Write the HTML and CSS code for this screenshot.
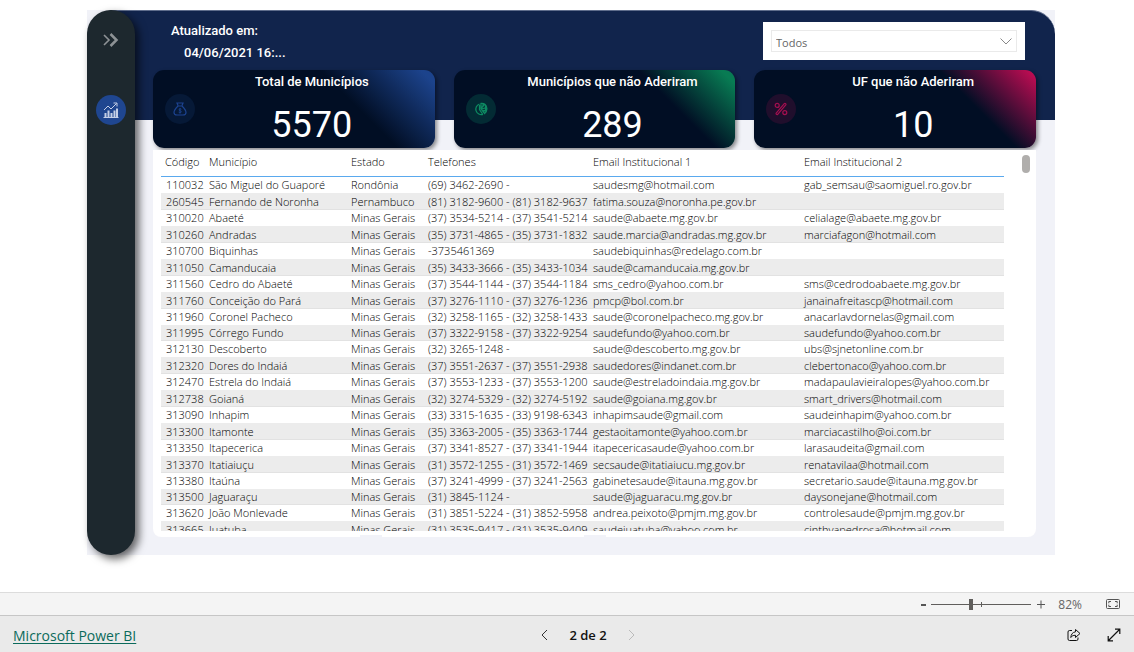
FILE: index.html
```html
<!DOCTYPE html>
<html lang="pt-BR">
<head>
<meta charset="utf-8">
<meta name="viewport" content="width=device-width, initial-scale=1">
<title>Microsoft Power BI</title>
<link rel="stylesheet" href="styles.css">
</head>
<body>
<main class="stage">
  <div class="report">
    <nav class="sidebar" aria-label="Menu">
      <button class="side-btn" type="button" aria-label="Expandir menu">
        <svg width="18" height="16" viewBox="0 0 18 16" fill="none" stroke="#8d9295"><path d="M2 3l5 5-5 5" stroke-width="1.6"/><path d="M8.500 2l6 6-6 6" stroke-width="2.500"/></svg>
      </button>
      <button class="side-btn side-btn-active" type="button" aria-label="Indicadores">
        <svg width="16" height="16" viewBox="0 0 16 16" fill="none" stroke="#c3cee6"><path d="M1 8l4-4 3 3 5.500-5.500M10.500 1H14v3.500"/><path d="M.5 15.500h15" /><path d="M2.500 15v-4M5.500 15V8.500M8.500 15v-4M11.500 15V8.500M14 15V6.500" stroke-width="2"/></svg>
      </button>
    </nav>
    <div class="content">
      <header class="report-head">
        <div class="updated">
          <p class="updated-label">Atualizado em:</p>
          <p class="updated-date">04/06/2021 16:...</p>
        </div>
        <div class="slicer">
          <select class="slicer-select" aria-label="Filtro"><option>Todos</option></select>
          <svg class="slicer-arrow" width="12" height="7" viewBox="0 0 12 7" fill="none" stroke="#888"><path d="M.5.5L6 6 11.500.5"/></svg>
        </div>
      </header>
      <section class="cards">
        <article class="card card-blue">
          <span class="card-icon"><svg width="14" height="14" viewBox="0 0 14 14" fill="none" stroke="#1c4390" stroke-width="1.200"><path d="M5 3.500L4 1h6L9 3.500M4.500 4h5M5 4C3 6 1 8 1 10.500 1 12.500 2 13 4 13h6c2 0 3-.5 3-2.500C13 8 11 6 9 4"/><path d="M8.300 7.300C7.500 6.500 5.800 6.800 6 8c.2 1 2.300.6 2.300 1.800 0 1-1.700 1.200-2.600.4M7 6v5.500" stroke-width=".9"/></svg></span>
          <h2 class="card-title">Total de Municípios</h2>
          <p class="card-value">5570</p>
        </article>
        <article class="card card-green">
          <span class="card-icon"><svg width="14" height="14" viewBox="0 0 14 14" fill="none" stroke="#0d8a62" stroke-width="1.300"><path d="M5.500 2A5.300 5.300 0 1 0 9 12.300"/><path d="M5.500 3v4.500L8.500 12M7 1.500v5.200l3.600 4.800c2-1.700 2.600-3.500 2.100-5.800C12.200 3 10 1.200 7 1.500zM7 6.500l3.500-4M7.500 7l5-1.500M9 8.500l3.500.5M9 2v3M11.500 3.500v7"/></svg></span>
          <h2 class="card-title">Municípios que não Aderiram</h2>
          <p class="card-value">289</p>
        </article>
        <article class="card card-red">
          <span class="card-icon"><svg width="14" height="14" viewBox="0 0 14 14" fill="none" stroke="#a50f50" stroke-width="1.200"><circle cx="3.200" cy="3.400" r="2"/><circle cx="10.800" cy="10.600" r="2"/><path d="M10.300 1.600c.8-.8 2.200.4 1.500 1.300L3.700 12.400c-.8.800-2.200-.4-1.500-1.300z"/></svg></span>
          <h2 class="card-title">UF que não Aderiram</h2>
          <p class="card-value">10</p>
        </article>
      </section>
      <section class="panel">
        <div class="table-scroll">
          <table class="grid">
            <colgroup><col class="c-code"><col class="c-city"><col class="c-state"><col class="c-phone"><col class="c-mail"><col class="c-mail2"></colgroup>
            <thead><tr><th>Código</th><th>Município</th><th>Estado</th><th>Telefones</th><th>Email Institucional 1</th><th>Email Institucional 2</th></tr></thead>
            <tbody>
              <tr><td>110032</td><td>São Miguel do Guaporé</td><td>Rondônia</td><td>(69) 3462-2690 -</td><td>saudesmg@hotmail.com</td><td>gab_semsau@saomiguel.ro.gov.br</td></tr>
              <tr><td>260545</td><td>Fernando de Noronha</td><td>Pernambuco</td><td>(81) 3182-9600 - (81) 3182-9637</td><td>fatima.souza@noronha.pe.gov.br</td><td></td></tr>
              <tr><td>310020</td><td>Abaeté</td><td>Minas Gerais</td><td>(37) 3534-5214 - (37) 3541-5214</td><td>saude@abaete.mg.gov.br</td><td>celialage@abaete.mg.gov.br</td></tr>
              <tr><td>310260</td><td>Andradas</td><td>Minas Gerais</td><td>(35) 3731-4865 - (35) 3731-1832</td><td>saude.marcia@andradas.mg.gov.br</td><td>marciafagon@hotmail.com</td></tr>
              <tr><td>310700</td><td>Biquinhas</td><td>Minas Gerais</td><td>-3735461369</td><td>saudebiquinhas@redelago.com.br</td><td></td></tr>
              <tr><td>311050</td><td>Camanducaia</td><td>Minas Gerais</td><td>(35) 3433-3666 - (35) 3433-1034</td><td>saude@camanducaia.mg.gov.br</td><td></td></tr>
              <tr><td>311560</td><td>Cedro do Abaeté</td><td>Minas Gerais</td><td>(37) 3544-1144 - (37) 3544-1184</td><td>sms_cedro@yahoo.com.br</td><td>sms@cedrodoabaete.mg.gov.br</td></tr>
              <tr><td>311760</td><td>Conceição do Pará</td><td>Minas Gerais</td><td>(37) 3276-1110 - (37) 3276-1236</td><td>pmcp@bol.com.br</td><td>janainafreitascp@hotmail.com</td></tr>
              <tr><td>311960</td><td>Coronel Pacheco</td><td>Minas Gerais</td><td>(32) 3258-1165 - (32) 3258-1433</td><td>saude@coronelpacheco.mg.gov.br</td><td>anacarlavdornelas@gmail.com</td></tr>
              <tr><td>311995</td><td>Córrego Fundo</td><td>Minas Gerais</td><td>(37) 3322-9158 - (37) 3322-9254</td><td>saudefundo@yahoo.com.br</td><td>saudefundo@yahoo.com.br</td></tr>
              <tr><td>312130</td><td>Descoberto</td><td>Minas Gerais</td><td>(32) 3265-1248 -</td><td>saude@descoberto.mg.gov.br</td><td>ubs@sjnetonline.com.br</td></tr>
              <tr><td>312320</td><td>Dores do Indaiá</td><td>Minas Gerais</td><td>(37) 3551-2637 - (37) 3551-2938</td><td>saudedores@indanet.com.br</td><td>clebertonaco@yahoo.com.br</td></tr>
              <tr><td>312470</td><td>Estrela do Indaiá</td><td>Minas Gerais</td><td>(37) 3553-1233 - (37) 3553-1200</td><td>saude@estreladoindaia.mg.gov.br</td><td>madapaulavieiralopes@yahoo.com.br</td></tr>
              <tr><td>312738</td><td>Goianá</td><td>Minas Gerais</td><td>(32) 3274-5329 - (32) 3274-5192</td><td>saude@goiana.mg.gov.br</td><td>smart_drivers@hotmail.com</td></tr>
              <tr><td>313090</td><td>Inhapim</td><td>Minas Gerais</td><td>(33) 3315-1635 - (33) 9198-6343</td><td>inhapimsaude@gmail.com</td><td>saudeinhapim@yahoo.com.br</td></tr>
              <tr><td>313300</td><td>Itamonte</td><td>Minas Gerais</td><td>(35) 3363-2005 - (35) 3363-1744</td><td>gestaoitamonte@yahoo.com.br</td><td>marciacastilho@oi.com.br</td></tr>
              <tr><td>313350</td><td>Itapecerica</td><td>Minas Gerais</td><td>(37) 3341-8527 - (37) 3341-1944</td><td>itapecericasaude@yahoo.com.br</td><td>larasaudeita@gmail.com</td></tr>
              <tr><td>313370</td><td>Itatiaiuçu</td><td>Minas Gerais</td><td>(31) 3572-1255 - (31) 3572-1469</td><td>secsaude@itatiaiucu.mg.gov.br</td><td>renatavilaa@hotmail.com</td></tr>
              <tr><td>313380</td><td>Itaúna</td><td>Minas Gerais</td><td>(37) 3241-4999 - (37) 3241-2563</td><td>gabinetesaude@itauna.mg.gov.br</td><td>secretario.saude@itauna.mg.gov.br</td></tr>
              <tr><td>313500</td><td>Jaguaraçu</td><td>Minas Gerais</td><td>(31) 3845-1124 -</td><td>saude@jaguaracu.mg.gov.br</td><td>daysonejane@hotmail.com</td></tr>
              <tr><td>313620</td><td>João Monlevade</td><td>Minas Gerais</td><td>(31) 3851-5224 - (31) 3852-5958</td><td>andrea.peixoto@pmjm.mg.gov.br</td><td>controlesaude@pmjm.mg.gov.br</td></tr>
              <tr><td>313665</td><td>Juatuba</td><td>Minas Gerais</td><td>(31) 3535-9417 - (31) 3535-9409</td><td>saudejuatuba@yahoo.com.br</td><td>cinthyapedrosa@hotmail.com</td></tr>
            </tbody>
          </table>
        </div>
        <div class="scrollbar"></div>
      </section>
    </div>
  </div>
</main>
<div class="zoombar">
  <button class="zoom-btn" type="button" aria-label="Reduzir"><svg width="10" height="10" viewBox="0 0 10 10" stroke="#555" stroke-width="2"><path d="M5 6h5"/></svg></button>
  <div class="zoom-track"><input class="zoom-range" type="range" min="0" max="100" value="39" aria-label="Zoom"></div>
  <button class="zoom-btn" type="button" aria-label="Ampliar"><svg width="10" height="10" viewBox="0 0 10 10" stroke="#555"><path d="M1 5.500h8M5 1.500v8"/></svg></button>
  <span class="zoom-value">82%</span>
  <button class="icon-btn" type="button" aria-label="Ajustar à página"><svg width="14" height="12" viewBox="0 0 14 12" fill="none" stroke="#555"><rect x=".5" y="1.500" width="13" height="9" rx="1"/><path d="M5 3.500H2.800v1.800M9 3.500h2.200v1.800M5 8.500H2.800V6.700M9 8.500h2.200V6.700"/></svg></button>
</div>
<footer class="footer">
  <div class="footer-side"><a class="brand" href="#">Microsoft Power BI</a></div>
  <div class="pager">
    <button class="icon-btn" type="button" aria-label="Página anterior"><svg width="7" height="12" viewBox="0 0 7 12" fill="none" stroke="#333"><path d="M6 1L1 6l5 5"/></svg></button>
    <span class="pager-text">2 de 2</span>
    <button class="icon-btn" type="button" aria-label="Próxima página" disabled><svg width="7" height="12" viewBox="0 0 7 12" fill="none" stroke="#bbb"><path d="M1 1l5 5-5 5"/></svg></button>
  </div>
  <div class="footer-side footer-actions">
    <button class="icon-btn" type="button" aria-label="Compartilhar"><svg width="14" height="14" viewBox="0 0 14 14" fill="none" stroke="#111" stroke-linejoin="round"><path d="M5 2.500H2.500a1.500 1.500 0 0 0-1.500 1.500v7a1.500 1.500 0 0 0 1.500 1.500h7a1.500 1.500 0 0 0 1.500-1.500v-1.500"/><path d="M8.500 1.500l4.500 4-4.500 4v-2.200C6 7.200 4.800 8 3.800 9.500 4 6.500 5.500 4.200 8.500 3.800z"/></svg></button>
    <button class="icon-btn" type="button" aria-label="Tela cheia"><svg width="14" height="14" viewBox="0 0 14 14" fill="none" stroke="#111" stroke-width="1.200"><path d="M1.500 12.500l11-11M8 1.200h4.800V6M1.200 8v4.800H6"/></svg></button>
  </div>
</footer>
</body>
</html>
```

FILE: styles.css
```css
* { box-sizing: border-box; }

body {
  margin: 0;
  height: 100vh;
  display: flex;
  flex-direction: column;
  background: #fff;
  color: #252423;
  font-family: "Open Sans", "Noto Sans", sans-serif;
  font-size: 11px;
}

h2, p { margin: 0; }

button {
  padding: 0;
  border: 0;
  background: none;
  font: inherit;
  color: inherit;
}

svg { display: block; }

.stage {
  flex: 1;
  min-height: 0;
  display: flex;
  padding: 10px 79px 37px 87px;
}

.report {
  position: relative;
  flex: 1;
  display: flex;
  background: #f1f2f8;
}

.report::before {
  content: "";
  position: absolute;
  inset: 0 0 auto;
  height: 109px;
  border-radius: 28px 24px 0 0;
  border-top: 1px solid #5f6d8c;
  background: #11244c;
}

.sidebar {
  position: relative;
  width: 48px;
  padding-top: 15px;
  display: flex;
  flex-direction: column;
  align-items: center;
  gap: 40px;
  border-radius: 24px;
  background: #1d282e;
  box-shadow: 4px 4px 8px rgba(0, 0, 0, .6);
}

.side-btn {
  width: 30px;
  height: 30px;
  display: grid;
  place-items: center;
  border-radius: 50%;
}

.side-btn-active { background: #1f4690; }

.content {
  position: relative;
  flex: 1;
  min-width: 0;
  display: flex;
  flex-direction: column;
  padding: 0 19px 18px 18px;
}

.report-head {
  height: 60px;
  display: flex;
  justify-content: space-between;
  align-items: flex-start;
  padding: 10px 11px 0 18px;
}

.updated {
  color: #fff;
  font: 500 13px/22px Roboto, sans-serif;
}

.updated-date { padding-left: 13px; }

.slicer {
  position: relative;
  width: 262px;
  margin-top: 2px;
  padding: 8px;
  background: #fff;
}

.slicer-select {
  display: block;
  width: 100%;
  height: 22px;
  padding: 2px 4px 0;
  appearance: none;
  border: 1px solid #eaeaea;
  border-radius: 0;
  background: #fff;
  color: #666;
  font: inherit;
}

.slicer-arrow {
  position: absolute;
  right: 13px;
  top: 16px;
  pointer-events: none;
}

.cards {
  display: grid;
  grid-template-columns: repeat(3, 1fr);
  gap: 19px;
}

.card {
  display: grid;
  grid-template-columns: 30px 1fr;
  grid-template-rows: 24px 54px;
  column-gap: 12px;
  padding: 0 18px 0 12px;
  border-radius: 11px;
  background: #010e24;
  box-shadow: 2px 2px 4px rgba(0, 0, 0, .45);
  color: #fff;
  text-align: center;
  font-family: Roboto, sans-serif;
}

.card-blue { background: linear-gradient(45deg, #010e24 68%, #1c438c 96%); }
.card-green { background: linear-gradient(45deg, #010e24 73%, #087b53 96%); }
.card-red { background: linear-gradient(45deg, #010e24 73%, #bb0c52 98%); }

.card-icon {
  grid-row: 1 / 3;
  align-self: center;
  width: 30px;
  height: 30px;
  display: grid;
  place-items: center;
  border-radius: 50%;
}

.card-blue .card-icon { background: #061937; }
.card-green .card-icon { background: #032b34; }
.card-red .card-icon { background: #200e2c; }

.card-title {
  font-size: 13px;
  font-weight: 500;
  line-height: 24px;
}

.card-value {
  font-size: 36px;
  line-height: 62px;
}

.panel {
  flex: 1;
  min-height: 0;
  display: flex;
  margin-top: 2px;
  padding: 0 6px 6px 8px;
  border-radius: 0 0 8px 8px;
  background:
    linear-gradient(#f1f2f8, #f1f2f8) 24% 100% / 22px 2px no-repeat,
    linear-gradient(#f1f2f8, #f1f2f8) 50% 100% / 22px 2px no-repeat,
    #fff;
}

.table-scroll {
  flex: 1;
  overflow-y: auto;
  scrollbar-width: none;
}

.grid {
  width: 100%;
  table-layout: fixed;
  border-collapse: separate;
  border-spacing: 0;
  font-weight: 300;
  color: #000;
}

.c-code { width: 44px; }
.c-city { width: 142px; }
.c-state { width: 77px; }
.c-phone { width: 165px; }
.c-mail { width: 211px; }
.c-mail2 { width: 204px; }

.grid th, .grid td {
  padding: 0 4px;
  text-align: left;
  font-weight: inherit;
  white-space: nowrap;
  line-height: 15px;
}

.grid th {
  height: 27px;
  padding-bottom: 4px;
  border-bottom: 1px solid #5aa9ee;
}

.grid td {
  height: 16px;
  padding-bottom: 1px;
}

.grid td:first-child { padding-left: 5px; }

.grid tr:nth-child(even) td {
  height: 17px;
  padding-bottom: 0;
  background: #ececec;
  border-bottom: 1px solid #e2e2e2;
}

.grid tr:nth-child(10n) td { height: 16px; }

.scrollbar {
  width: 8px;
  height: 18px;
  margin: 5px 0 0 18px;
  border-radius: 4px;
  background: #b0aeac;
}

.zoombar {
  height: 23px;
  display: flex;
  align-items: center;
  justify-content: flex-end;
  padding-right: 14px;
  border-top: 1px solid #dcdcdc;
  background: #f4f4f4;
  color: #666;
  font-size: 12px;
}

.zoom-btn {
  width: 10px;
  height: 10px;
}

.zoom-track {
  width: 100px;
  margin: 0 5px;
  background: linear-gradient(#605e5c, #605e5c) 50% 50% / 1px 5px no-repeat;
}

.zoom-range {
  display: block;
  width: 100%;
  height: 12px;
  margin: 0;
  appearance: none;
  background: linear-gradient(#605e5c, #605e5c) 0 50% / 100% 1px no-repeat;
}

.zoom-range::-webkit-slider-thumb {
  appearance: none;
  width: 4px;
  height: 11px;
  background: #605e5c;
}

.zoom-value {
  margin: 0 24px 0 12px;
}

.footer {
  height: 37px;
  display: flex;
  align-items: center;
  padding: 2px 13px 0;
  border-top: 1px solid #c6c6c6;
  background: #eaeaea;
  font-size: 13px;
}

.footer-side { flex: 1; }

.brand {
  color: #0b6a5b;
  font-size: 14px;
  text-underline-offset: 2px;
}

.pager {
  display: flex;
  align-items: center;
  gap: 21px;
  margin-left: 42px;
}

.pager-text {
  color: #111;
  font-weight: 600;
}

.footer-actions {
  display: flex;
  justify-content: flex-end;
  gap: 26px;
}
```
